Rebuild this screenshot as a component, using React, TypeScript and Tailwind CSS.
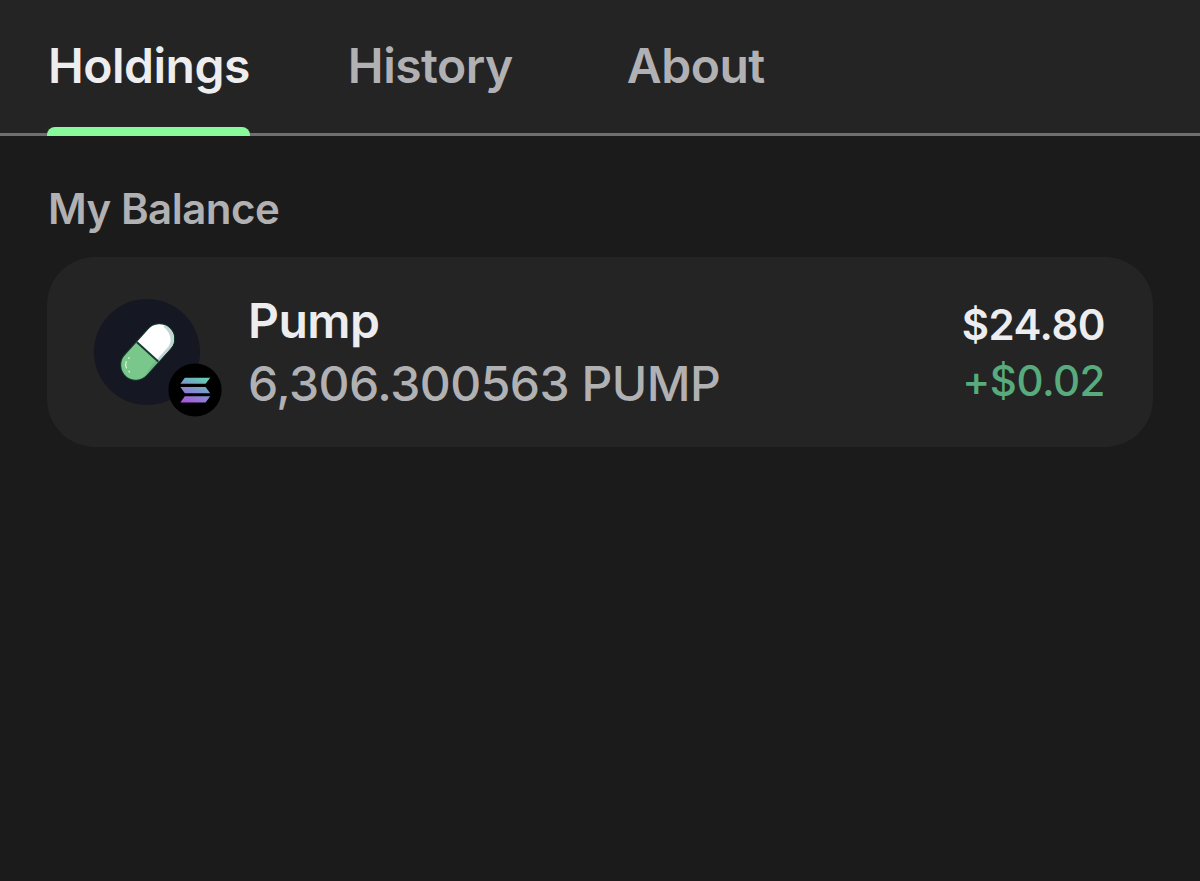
import clsx from 'clsx';

type Tab = { label: string; className: string };

const TABS: Tab[] = [
  { label: 'Holdings', className: 'text-[#ededf0]' },
  { label: 'History', className: 'text-[#b1b1b4]' },
  { label: 'About', className: 'ml-4 text-[#b1b1b4]' },
];

const PumpLogo = () => (
  <svg className="size-full" viewBox="0 0 106 106">
    <defs>
      <clipPath id="pill">
        <rect x="-32.3" y="-14.6" width="64.6" height="29.2" rx="14.6" />
      </clipPath>
    </defs>
    <circle cx="53" cy="53" r="53" fill="#151722" />
    <g transform="translate(53.6 52.9) rotate(-48)">
      <rect x="-33.3" y="-15.6" width="66.6" height="31.2" rx="15.6" fill="#163d2f" />
      <g clipPath="url(#pill)">
        <rect x="-33" y="-15" width="33" height="30" fill="#7ac78c" />
        <path d="M-24 15C-14 12.5-8 12 0 12V16H-24Z" fill="#6eb983" />
        <rect x="0" y="-15" width="33" height="30" fill="#fff" />
        <path d="M0 12H16C24 12 29.5 6 29.5 -5H34V16H0Z" fill="#c3d4d5" />
        <rect x="-1" y="-15" width="2" height="30" fill="#163d2f" />
      </g>
      <path
        d="M-17.5 -9.8H-16.5M-26 -5C-25 -7.4-23.4 -8.8-21.6 -9.4M-27 -1V0"
        fill="none"
        stroke="#d9f5df"
        strokeWidth="1.2"
        strokeLinecap="round"
      />
    </g>
  </svg>
);

const SolanaLogo = () => (
  <svg className="size-full" viewBox="0 0 54 54">
    <defs>
      <linearGradient id="sol" x1="20" y1="40" x2="32" y2="13" gradientUnits="userSpaceOnUse">
        <stop offset="0" stopColor="#a957dc" />
        <stop offset="0.5" stopColor="#7f93cc" />
        <stop offset="1" stopColor="#62ceb0" />
      </linearGradient>
    </defs>
    <circle cx="27" cy="27" r="26.6" fill="#000" />
    <g fill="url(#sol)">
      <path d="M16.8 14.8H42.2L37.6 20.7H12.4Z" />
      <path d="M12.4 24H37.6L42.2 30.2H16.8Z" />
      <path d="M16.8 33.3H42.2L37.6 39.4H12.4Z" />
    </g>
  </svg>
);

export default function App() {
  return (
    <div className="h-[881px] w-full overflow-hidden bg-[#1b1b1b] font-[Inter,sans-serif] tracking-[-0.5px]">
      <nav className="flex h-[136px] gap-[98px] border-b-[3px] border-[#6f6f6f] bg-[#242424] px-12 text-[48px] font-semibold">
        {TABS.map(({ label, className }, index) => (
          <div key={label} className={clsx('relative h-[136px] pt-[30px]', className)}>
            {label}
            {index === 0 && (
              <div className="absolute -left-px right-0 bottom-0 h-[9px] rounded-t-[8px] bg-[#88fa9b]" />
            )}
          </div>
        ))}
      </nav>
      <h2 className="mt-[42px] px-12 text-[42px] font-semibold leading-[62px] text-[#b1b1b4]">
        My Balance
      </h2>
      <div className="mx-[47px] mt-[17px] flex h-[190px] items-center rounded-[48px] bg-[#242424] pl-[47px] pr-12">
        <div className="relative size-[106px]">
          <PumpLogo />
          <div className="absolute left-[74px] top-[64px] size-[54px]">
            <SolanaLogo />
          </div>
        </div>
        <div className="ml-12 flex-1 text-[48px]">
          <div className="font-semibold leading-[62px] text-[#ededf0]">Pump</div>
          <div className="font-medium leading-[63px] text-[#b1b1b4]">6,306.300563 PUMP</div>
        </div>
        <div className="pt-px text-right text-[42px] leading-[56px]">
          <div className="font-semibold text-[#ededf0]">$24.80</div>
          <div className="font-medium text-[#58ab7c]">+$0.02</div>
        </div>
      </div>
    </div>
  );
}
